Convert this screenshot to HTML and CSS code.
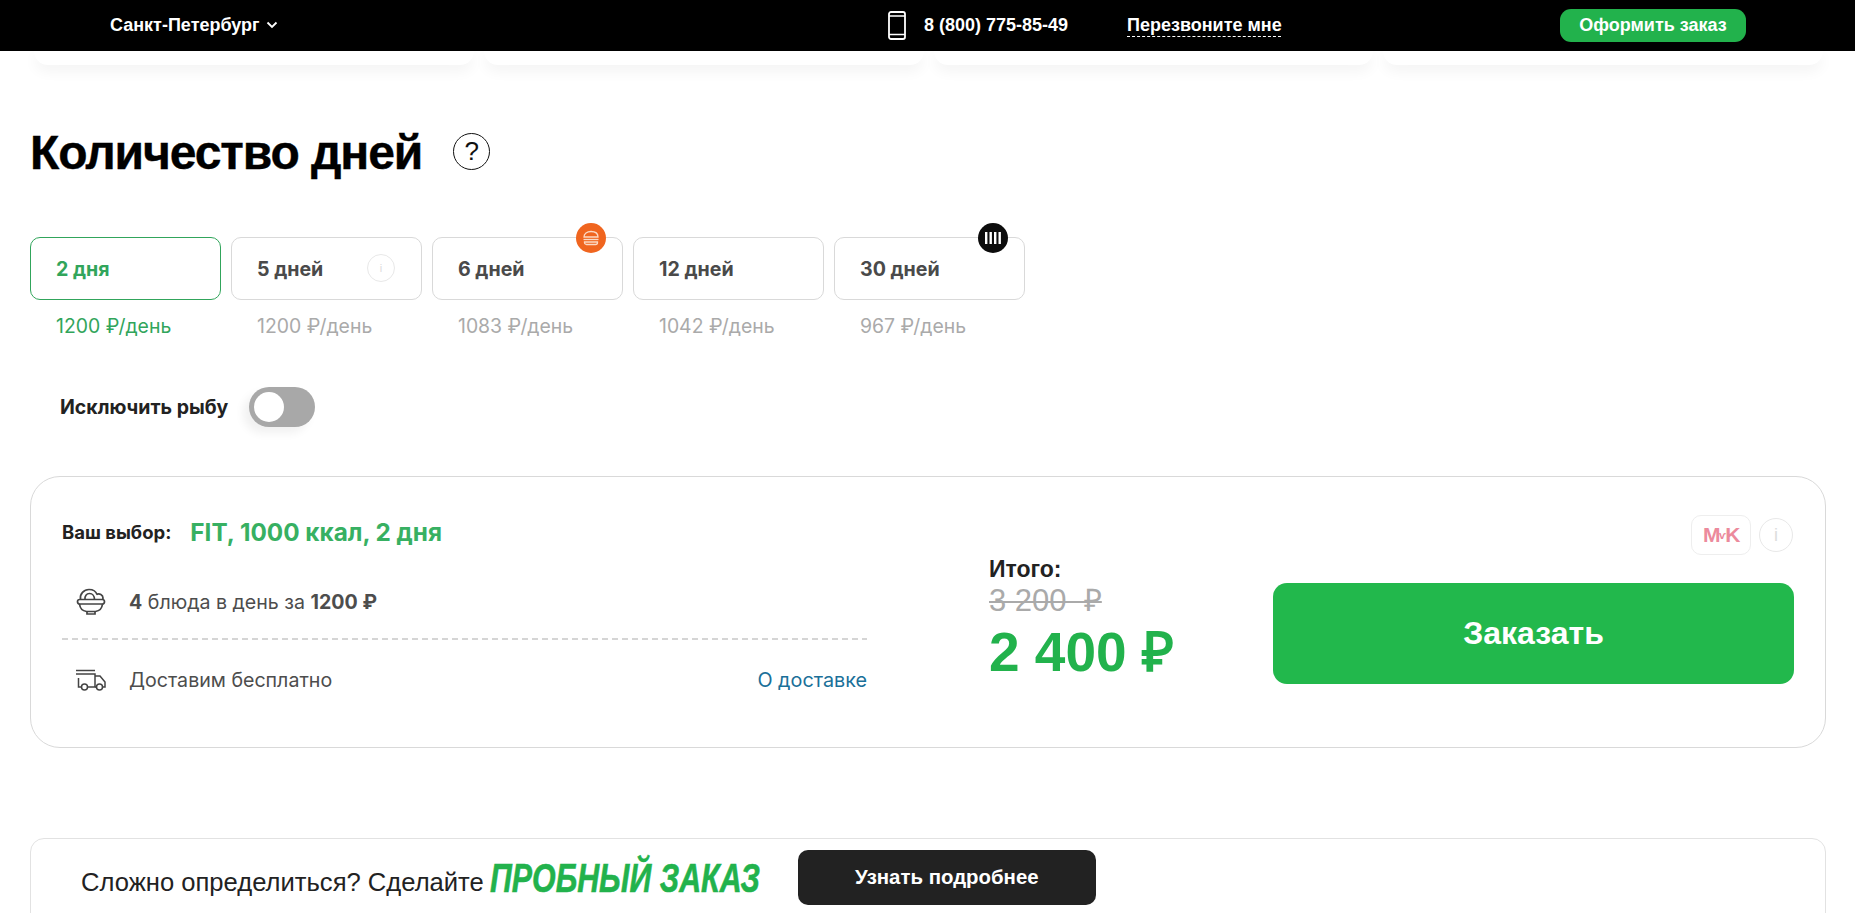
FILE: index.html
```html
<!DOCTYPE html>
<html lang="ru">
<head>
<meta charset="utf-8">
<title>Количество дней</title>
<link rel="stylesheet" href="styles.css">
</head>
<body>
<header class="topbar">
  <div class="city">Санкт-Петербург
    <svg class="chev" width="12" height="8" viewBox="0 0 12 8"><path d="M1.500 1.500 6 6l4.500-4.500" fill="none" stroke="#fff" stroke-width="1.800"/></svg>
  </div>
  <svg class="phone-ico" width="18" height="29" viewBox="0 0 18 29"><rect x="1" y="1" width="16" height="27" rx="2" fill="none" stroke="#fff" stroke-width="1.800"/><path d="M1 5h16M1 23.500h16" stroke="#fff" stroke-width="1.500"/></svg>
  <div class="phone">8 (800) 775-85-49</div>
  <div class="callback">Перезвоните мне</div>
  <div class="order-btn">Оформить заказ</div>
</header>

<div class="peek">
  <div class="peek-card"></div><div class="peek-card"></div><div class="peek-card"></div><div class="peek-card"></div>
</div>

<main class="content">
  <div class="heading">
    <h1>Количество дней</h1>
    <div class="help">?</div>
  </div>

  <div class="days">
    <div class="day day-active">
      <div class="day-box">2 дня</div>
      <div class="day-price">1200 ₽/день</div>
    </div>
    <div class="day">
      <div class="day-box">5 дней<span class="info info-sm">i</span></div>
      <div class="day-price">1200 ₽/день</div>
    </div>
    <div class="day">
      <div class="day-box">6 дней
        <span class="badge badge-orange">
          <svg width="18" height="16" viewBox="0 0 18 16" fill="none" stroke="#fbd9c4" stroke-width="1.300"><path d="M2 7c0-3.500 3-5.500 7-5.500S16 3.500 16 7z"/><path d="M1.500 9.500h15"/><path d="M2.500 12h13v.5a2 2 0 0 1-2 2h-9a2 2 0 0 1-2-2z"/></svg>
        </span>
      </div>
      <div class="day-price">1083 ₽/день</div>
    </div>
    <div class="day">
      <div class="day-box">12 дней</div>
      <div class="day-price">1042 ₽/день</div>
    </div>
    <div class="day">
      <div class="day-box">30 дней
        <span class="badge badge-black">
          <svg width="18" height="14" viewBox="0 0 18 14" fill="#fff"><rect x="1" y="1" width="2.400" height="12"/><rect x="5.500" y="1" width="2.400" height="12"/><rect x="10" y="1" width="2.400" height="12"/><rect x="14.500" y="1" width="2.400" height="12"/></svg>
        </span>
      </div>
      <div class="day-price">967 ₽/день</div>
    </div>
  </div>

  <div class="exclude">
    <span class="exclude-label">Исключить рыбу</span>
    <span class="toggle"><span class="knob"></span></span>
  </div>

  <section class="summary">
    <div class="summary-left">
      <div class="choice"><span class="choice-label">Ваш выбор:</span><span class="choice-value">FIT, 1000 ккал, 2 дня</span></div>
      <div class="row row-dishes">
        <svg class="row-ico" width="30" height="28" viewBox="0 0 30 28" fill="none" stroke="#444" stroke-width="1.700"><rect x="1.500" y="11.500" width="27" height="4.500" rx="2.250"/><path d="M3.500 16c.5 4.500 3.500 7 7 7.500h9c3.500-.5 6.500-3 7-7.500"/><path d="M11 23.500v2.500h8v-2.500"/><path d="M4.500 11.500C3.500 6 8 1.500 13 1.500c4 0 7 2 8 5"/><path d="M9 11.500c-.5-3.500 1.500-6 4.500-6s5 2.500 5 6"/><path d="M20.500 6.500c3-1.500 6.500.5 6.500 3.500 0 .5-.1 1-.3 1.500"/></svg>
        <span class="row-text"><b>4</b> блюда в день за <b>1200 ₽</b></span>
      </div>
      <div class="row row-delivery">
        <svg class="row-ico" width="32" height="22" viewBox="0 0 32 22" fill="none" stroke="#444" stroke-width="1.500"><path d="M1 1.500h19"/><path d="M3.500 5H20v13h-7M6 18H3.500V9M1 5h5"/><path d="M20 7h5l5 6v5h-2.500M21 18h-1"/><circle cx="9.500" cy="18" r="3"/><circle cx="24.500" cy="18" r="3"/></svg>
        <span class="row-text">Доставим бесплатно</span>
        <span class="row-link">О доставке</span>
      </div>
    </div>
    <div class="totals">
      <div class="total-label">Итого:</div>
      <div class="total-old">3 200&nbsp; ₽</div>
      <div class="total-new">2 400 ₽</div>
    </div>
    <div class="summary-right">
      <div class="marks">
        <span class="mark">M<i>ѵ</i>K</span>
        <span class="info info-lg">i</span>
      </div>
      <div class="buy-btn">Заказать</div>
    </div>
  </section>

  <section class="trial">
    <span class="trial-text">Сложно определиться? Сделайте</span>
    <span class="trial-accent">ПРОБНЫЙ ЗАКАЗ</span>
    <span class="trial-btn">Узнать подробнее</span>
  </section>
</main>
</body>
</html>
```
FILE: styles.css
```css
* { box-sizing: border-box; }
html, body { margin: 0; height: 100%; }
body {
  height: 913px;
  overflow: hidden;
  background: #fff;
  color: #222;
  font-family: "Liberation Sans", Arial, sans-serif;
}
.topbar {
  height: 51px;
  background: #000;
  color: #fff;
  display: flex;
  align-items: center;
  padding-left: 110px;
  font-weight: 700;
  font-size: 18px;
}
.city { width: 778px; display: flex; align-items: center; gap: 6px; }
.chev { margin-top: -1px; }
.phone-ico { flex: none; }
.phone { margin-left: 18px; width: 203px; }
.callback { flex: none; width: 154px; line-height: 20px; padding-bottom: 1px; border-bottom: 1px dashed #fff; margin-top: 1px; margin-right: 279px; white-space: nowrap; }
.order-btn {
  width: 186px;
  height: 33px;
  border-radius: 11px;
  background: #22b24c;
  display: flex;
  align-items: center;
  justify-content: center;
}
.peek { display: flex; gap: 10px; padding: 0 32px 0 34px; height: 14px; }
.peek-card {
  flex: 1;
  border-radius: 0 0 14px 14px;
  background: #fff;
  box-shadow: 0 6px 14px rgba(0, 0, 0, .05);
}
.content { padding: 0 29px 0 30px; }
.heading { display: flex; align-items: center; margin-top: 57px; height: 58px; }
h1 { margin: 4px 0 0; font-size: 48px; line-height: 58px; font-weight: 700; letter-spacing: -1.100px; color: #000; -webkit-text-stroke: .4px #000; }
.help {
  width: 37px;
  height: 37px;
  margin-left: 31px;
  border: 1.500px solid #111;
  border-radius: 50%;
  display: flex;
  align-items: center;
  justify-content: center;
  font-size: 26px;
  font-weight: 400;
  color: #111;
}
.days { display: flex; gap: 10px; margin-top: 57px; font-family: Inter, sans-serif; }
.day { width: 191px; }
.day-box {
  position: relative;
  height: 63px;
  padding-left: 25px;
  border: 1px solid #d9d9d9;
  border-radius: 10px;
  display: flex;
  align-items: center;
  font-size: 19.600px;
  font-weight: 700;
  color: #4a4a4a;
}
.day-price { margin-top: 15px; padding-left: 26px; font-size: 19.400px; line-height: 22px; color: #aaa; }
.day-active .day-box { border-color: #31a55b; color: #31a55b; }
.day-active .day-price { color: #31a55b; }
.info {
  display: flex;
  align-items: center;
  justify-content: center;
  border: 1px solid #e8e8e8;
  border-radius: 50%;
  color: #ddd;
  font-weight: 400;
  font-family: "Liberation Sans", sans-serif;
}
.info-sm { position: absolute; right: 26px; top: 16px; width: 28px; height: 28px; font-size: 11px; }
.info-lg { width: 34px; height: 34px; font-size: 18px; }
.badge {
  position: absolute;
  right: 16px;
  top: -15px;
  width: 30px;
  height: 30px;
  border-radius: 50%;
  display: flex;
  align-items: center;
  justify-content: center;
}
.badge-orange { background: #f0651f; }
.badge-black { background: #0c0c0c; }
.exclude { display: flex; align-items: center; margin-top: 50px; padding-left: 30px; gap: 21px; }
.exclude-label { font-family: Inter, sans-serif; font-size: 19.500px; font-weight: 700; color: #222; }
.toggle {
  position: relative;
  width: 66px;
  height: 40px;
  border-radius: 20px;
  background: #a8a8a8;
  box-shadow: -6px 6px 10px rgba(0, 0, 0, .06);
}
.knob {
  position: absolute;
  left: 5px;
  top: 5px;
  width: 30px;
  height: 30px;
  border-radius: 50%;
  background: #fff;
}
.summary {
  display: flex;
  height: 272px;
  margin-top: 49px;
  padding: 40px 31px 0 31px;
  border: 1px solid #d9d9d9;
  border-radius: 30px;
}
.summary-left { width: 805px; flex: none; }
.choice { display: flex; align-items: center; gap: 19px; height: 34px; margin-top: -2px; }
.choice-label { font-family: Inter, sans-serif; font-size: 18.500px; font-weight: 700; color: #222; }
.choice-value { font-family: Inter, sans-serif; font-size: 24.300px; font-weight: 700; color: #37b062; }
.row { display: flex; align-items: center; font-family: Inter, sans-serif; font-size: 19.600px; color: #4d4d4d; }
.row b { font-weight: 700; }
.row-ico { margin-left: 12.500px; width: 32px; flex: none; margin-right: 22.500px; }
.row-dishes {
  margin-top: 28px;
  height: 63px;
  padding-bottom: 14px;
  background: repeating-linear-gradient(90deg, #d5d5d5 0 6px, transparent 6px 10px) left bottom / 100% 2px no-repeat;
}
.row-delivery { height: 76px; padding-top: 3px; }
.row-link { margin-left: auto; color: #1a7099; font-size: 19.800px; }
.totals { width: 284px; flex: none; margin-left: 122px; padding-top: 39px; }
.total-label { font-size: 23px; font-weight: 700; line-height: 26px; color: #222; }
.total-old { margin-top: 1px; font-size: 31px; line-height: 36px; color: #aaa; text-decoration: line-through; text-decoration-thickness: 2px; width: max-content; }
.total-new { font-size: 55px; line-height: 60px; font-weight: 700; color: #22b24c; margin-top: 3px; }
.summary-right { flex: 1; display: flex; flex-direction: column; }
.marks { display: flex; justify-content: flex-end; align-items: center; gap: 8px; height: 40px; margin-top: -2px; margin-right: 1px; }
.mark {
  width: 60px;
  height: 40px;
  border: 1px solid #eee;
  border-radius: 10px;
  display: flex;
  align-items: center;
  justify-content: center;
  color: #ec8a9c;
  font-weight: 700;
  font-size: 21px;
  letter-spacing: -1.500px;
}
.mark i { font-style: normal; font-size: 11px; letter-spacing: -1px; }
.buy-btn {
  height: 101px;
  margin-top: 28px;
  border-radius: 14px;
  background: #22b84c;
  color: #fff;
  font-size: 32px;
  font-weight: 700;
  display: flex;
  align-items: center;
  justify-content: center;
}
.trial {
  display: flex;
  align-items: center;
  height: 100px;
  margin-top: 90px;
  padding: 0 0 22px 50px;
  border: 1px solid #e2e2e2;
  border-radius: 14px;
}
.trial-text { font-size: 25.600px; color: #222; margin-top: 10px; }
.trial-accent {
  display: inline-block;
  width: 267px;
  margin-left: 6px;
  margin-top: 2px;
  white-space: nowrap;
  font-size: 41px;
  font-weight: 700;
  font-style: italic;
  color: #22b24c;
  -webkit-text-stroke: .6px #22b24c;
  transform: scaleX(.74);
  transform-origin: left center;
}
.trial-btn {
  width: 298px;
  height: 55px;
  margin-left: 41px;
  border-radius: 10px;
  background: #222;
  color: #fff;
  font-size: 20.400px;
  font-weight: 700;
  display: flex;
  align-items: center;
  justify-content: center;
}
```
